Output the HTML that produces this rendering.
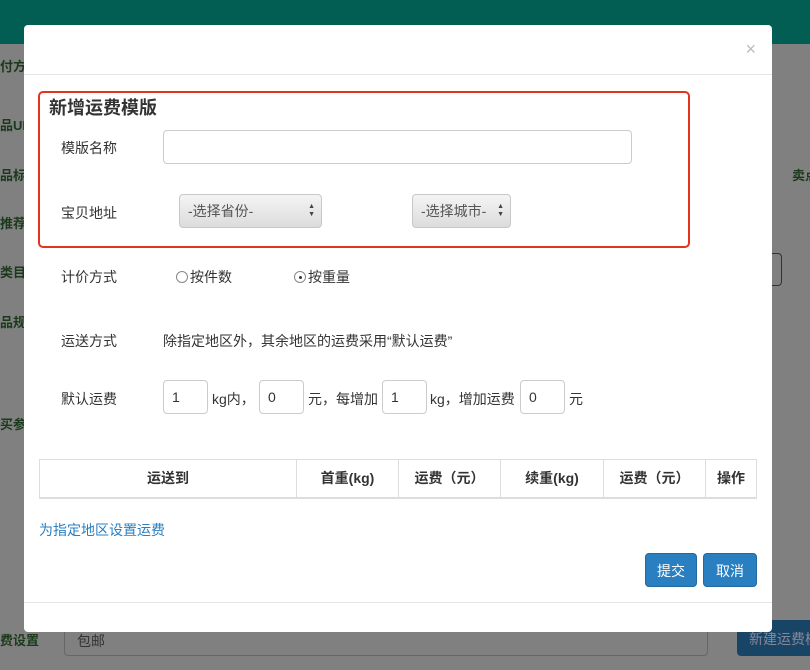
<!DOCTYPE html>
<html><head><meta charset="utf-8"><style>
*{box-sizing:border-box;margin:0;padding:0}
body{width:810px;height:670px;overflow:hidden;background:#808080;font-family:"Liberation Sans","Noto Sans CJK SC",sans-serif;font-size:14px;color:#333;position:relative}
.a{position:absolute;white-space:nowrap}
.top{left:0;top:0;width:810px;height:44px;background:#025d52}
.bgt{color:#1b3a1b;font-size:13px;font-weight:bold}
.modal{left:24px;top:25px;width:748px;height:607px;background:#fff;border-radius:4px}
.inp{border:1px solid #ccc;border-radius:4px;background:#fff;height:34px;padding:0 8px;line-height:32px}
.sel{border:1px solid #c8c8c8;border-radius:4px;background:linear-gradient(#f4f4f4,#dcdcdc);height:34px;line-height:32px;padding-left:8px;color:#555;font-size:14px}
.arr{position:absolute;right:6px;top:8px;font-size:7px;line-height:8px;color:#444}
.lbl{font-size:14px;color:#333}
.btn{background:#2a7fc0;color:#fff;border-radius:4px;height:34px;line-height:34px;text-align:center;font-size:14px;border:1px solid #23689e}
table{border-collapse:collapse}
th{border:1px solid #ddd;border-bottom:2px solid #ddd;height:38px;font-size:14px;font-weight:bold;color:#333}
.radio{display:inline-block;width:12px;height:12px;border:1px solid #888;border-radius:50%;vertical-align:-1px;margin-right:2px;position:relative}
</style></head><body>
<div class="a top"></div>
<div class="a bgt" style="left:0;top:56px">付方式</div>
<div class="a bgt" style="left:0;top:115px">品UR</div>
<div class="a bgt" style="left:0;top:165px">品标题</div>
<div class="a bgt" style="left:0;top:213px">推荐词</div>
<div class="a bgt" style="left:0;top:262px">类目</div>
<div class="a bgt" style="left:0;top:312px">品规格</div>
<div class="a bgt" style="left:0;top:414px">买参数</div>
<div class="a bgt" style="left:792px;top:165px">卖点</div>
<div class="a bgt" style="left:0;top:630px">费设置</div>
<div class="a" style="left:64px;top:620px;width:644px;height:36px;border:1px solid #666;border-radius:4px;background:#808080;color:#333;padding:10px 12px;font-size:14px">包邮</div>
<div class="a" style="left:737px;top:620px;width:80px;height:36px;background:#184466;border-radius:4px;color:#889;padding:9px 12px;overflow:hidden">新建运费模</div>
<div class="a" style="left:772px;top:253px;width:10px;height:33px;border:1px solid #333;border-left:none;border-radius:0 4px 4px 0"></div>

<div class="a modal">
 <div class="a" style="right:16px;top:14px;color:#bbb;font-size:18px">×</div>
 <div class="a" style="left:0;top:49px;width:748px;border-top:1px solid #e5e5e5"></div>
 <div class="a" style="left:14px;top:66px;width:652px;height:157px;border:2px solid #e5331f;border-radius:5px"></div>
 <div class="a" style="left:25px;top:69px;font-size:18px;font-weight:bold;color:#333">新增运费模版</div>
 <div class="a lbl" style="left:37px;top:113px">模版名称</div>
 <div class="a inp" style="left:139px;top:105px;width:469px;height:34px"></div>
 <div class="a lbl" style="left:37px;top:178px">宝贝地址</div>
 <div class="a sel" style="left:155px;top:169px;width:143px">-选择省份-<span class="arr">▲<br>▼</span></div>
 <div class="a sel" style="left:388px;top:169px;width:99px">-选择城市-<span class="arr">▲<br>▼</span></div>
 <div class="a lbl" style="left:37px;top:242px">计价方式</div>
 <div class="a lbl" style="left:152px;top:242px"><span class="radio"></span>按件数</div>
 <div class="a lbl" style="left:270px;top:242px"><span class="radio"><span style="position:absolute;left:4px;top:4px;width:3px;height:3px;background:#333;border-radius:50%"></span></span>按重量</div>
 <div class="a lbl" style="left:37px;top:306px">运送方式</div>
 <div class="a lbl" style="left:139px;top:306px">除指定地区外，其余地区的运费采用“默认运费”</div>
 <div class="a lbl" style="left:37px;top:364px">默认运费</div>
 <div class="a inp" style="left:139px;top:355px;width:45px;height:34px">1</div>
 <div class="a lbl" style="left:188px;top:364px">kg内，</div>
 <div class="a inp" style="left:235px;top:355px;width:45px;height:34px">0</div>
 <div class="a lbl" style="left:284px;top:364px">元，每增加</div>
 <div class="a inp" style="left:358px;top:355px;width:45px;height:34px">1</div>
 <div class="a lbl" style="left:406px;top:364px">kg，增加运费</div>
 <div class="a inp" style="left:496px;top:355px;width:45px;height:34px">0</div>
 <div class="a lbl" style="left:545px;top:364px">元</div>
 <table class="a" style="left:15px;top:434px;width:718px">
  <tr><th style="width:257px">运送到</th><th style="width:102px">首重(kg)</th><th style="width:102px">运费（元）</th><th style="width:103px">续重(kg)</th><th style="width:102px">运费（元）</th><th>操作</th></tr>
 </table>
 <div class="a" style="left:15px;top:495px;color:#2a7fc0;font-size:14px">为指定地区设置运费</div>
 <div class="a btn" style="left:621px;top:528px;width:52px">提交</div>
 <div class="a btn" style="left:679px;top:528px;width:54px">取消</div>
 <div class="a" style="left:0;top:577px;width:748px;border-top:1px solid #e5e5e5"></div>
</div>
</body></html>
